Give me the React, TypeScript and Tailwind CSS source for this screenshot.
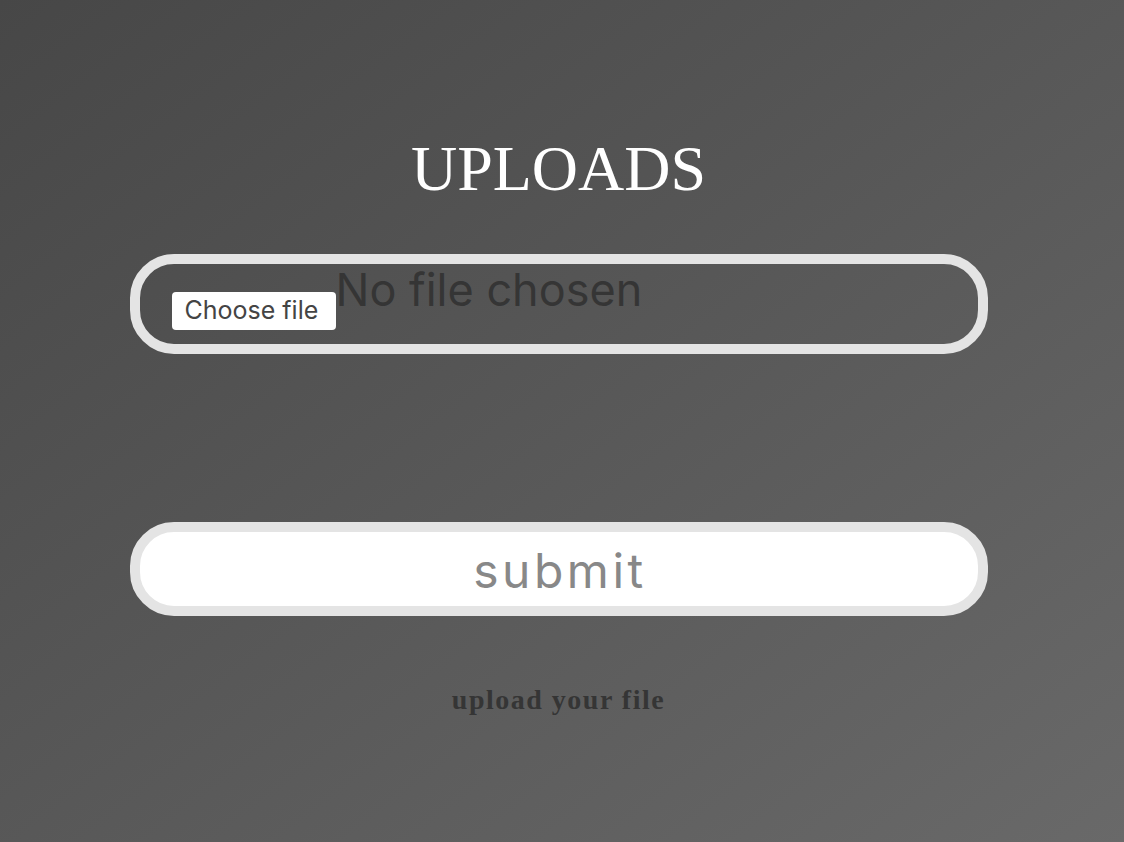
export default function App() {
  return (
    <div className="flex min-h-screen w-full flex-col items-center bg-linear-to-br from-[#474747] to-[#696969] pr-[7px] pt-[137px]">
      <h1 className="font-['Liberation_Serif',serif] text-[64px] leading-none text-white">UPLOADS</h1>

      <form className="mt-[53px] flex w-[858px] flex-col items-center">
        <label className="flex h-[100px] w-full items-start rounded-[44px] border-[10px] border-[#e4e4e4] pl-[32px] font-['Inter',sans-serif]">
          <span className="mt-[28px] flex h-[38px] w-[164px] shrink-0 items-center rounded-[4px] bg-white pl-[13px] text-[25px] text-[#444]">
            Choose file
          </span>
          <span className="mt-[4px] text-[45px] leading-[44px] text-[#353535]">No file chosen</span>
          <input type="file" className="hidden" />
        </label>

        <button
          type="button"
          className="mt-[168px] flex h-[94px] w-full items-center justify-center rounded-[44px] border-[10px] border-[#e4e4e4] bg-white pl-[3px] pt-[4px] font-['Inter',sans-serif] text-[48px] tracking-[3.5px] text-[#888]"
        >
          submit
        </button>
      </form>

      <p className="mt-[70px] font-['Liberation_Serif',serif] text-[28px] font-bold leading-none tracking-[1.5px] text-[#353535]">
        upload your file
      </p>
    </div>
  );
}
